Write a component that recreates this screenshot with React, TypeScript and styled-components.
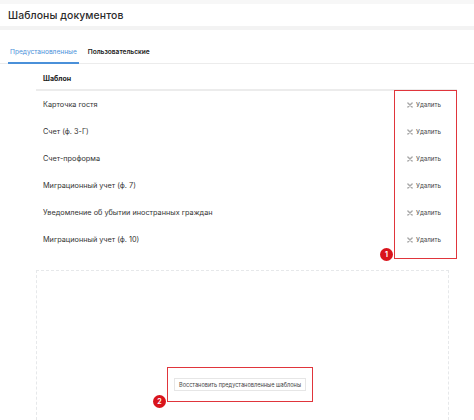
import React from "react";
import styled, { createGlobalStyle } from "styled-components";

const Global = createGlobalStyle`
  html, body { margin: 0; padding: 0; background: #ffffff; }
  body { font-family: Inter, "Noto Sans", sans-serif; color: #333; }
  * { box-sizing: border-box; }
`;

const Page = styled.div`
  width: 474px;
  height: 420px;
  overflow: hidden;
  background: #fff;
  display: flex;
  flex-direction: column;
  border-top: 4px solid #f7f7f7;
`;

const Header = styled.div`
  height: 22px;
  display: flex;
  align-items: center;
  padding-left: 8px;
  border-bottom: 4px solid #f3f3f3;
  box-sizing: content-box;
`;

const Title = styled.h1`
  margin: 0;
  font-size: 10.4px;
  font-weight: 500;
  color: #2b2b2b;
  letter-spacing: 0.1px;
`;

const Tabs = styled.div`
  margin-top: 12px;
  display: flex;
  gap: 7px;
  padding-left: 8px;
  border-bottom: 1px solid #ececec;
`;

const Tab = styled.div<{ $active?: boolean }>`
  height: 22px;
  padding: 0 2px;
  display: flex;
  align-items: center;
  font-size: 6.6px;
  font-weight: ${(p) => (p.$active ? 400 : 600)};
  color: ${(p) => (p.$active ? "#4a90d9" : "#222")};
  border-bottom: 2px solid ${(p) => (p.$active ? "#4a90d9" : "transparent")};
  margin-bottom: -1px;
`;

const Table = styled.div`
  position: relative;
  margin-left: 36px;
  width: 421px;
  margin-top: 4px;
`;

const HeadRow = styled.div`
  height: 23px;
  display: flex;
  align-items: center;
  padding-left: 7px;
  font-size: 7px;
  font-weight: 700;
  color: #222;
  border-bottom: 2px solid #ececec;
`;

const Row = styled.div`
  height: 27px;
  display: flex;
  align-items: center;
  justify-content: space-between;
  padding-left: 7px;
`;

const Name = styled.span`
  font-size: 7.3px;
  color: #333;
`;

const DeleteCell = styled.div`
  width: 62px;
  display: flex;
  align-items: center;
  gap: 3px;
  padding-left: 12px;
  font-size: 6.2px;
  color: #444;
`;

const Annot = styled.div`
  position: absolute;
  right: 0;
  top: 22px;
  width: 63px;
  height: 169px;
  border: 1.5px solid #e0353b;
  pointer-events: none;
`;

const Badge = styled.div<{ $left: number; $bottom: number }>`
  position: absolute;
  width: 13px;
  height: 13px;
  border-radius: 50%;
  background: #d9141c;
  color: #fff;
  font-size: 7px;
  font-weight: 700;
  display: flex;
  align-items: center;
  justify-content: center;
  left: ${(p) => p.$left}px;
  bottom: ${(p) => p.$bottom}px;
`;

const Panel = styled.div`
  margin-left: 36px;
  margin-top: 17px;
  width: 413px;
  flex: 1;
  border: 1px dashed #e6e8ea;
  border-bottom: none;
  display: flex;
  justify-content: center;
  padding-top: 96px;
`;

const ButtonFrame = styled.div`
  position: relative;
  height: 35px;
  width: 146px;
  border: 1.5px solid #e0353b;
  display: flex;
  align-items: center;
  justify-content: center;
  margin-right: 5px;
`;

const RestoreButton = styled.button`
  height: 13px;
  padding: 0 4px;
  border: 1px solid #e6e6e6;
  background: #fff;
  font-family: Inter, "Noto Sans", sans-serif;
  font-size: 5.6px;
  color: #444;
  display: flex;
  align-items: center;
`;

const XIcon = () => (
  <svg width="6" height="6" viewBox="0 0 10 10">
    <path d="M1.5 1.5 L8.5 8.5 M8.5 1.5 L1.5 8.5" stroke="#a8a8a8" strokeWidth="2.4" strokeLinecap="round" />
  </svg>
);

const rows = [
  "Карточка гостя",
  "Счет (ф. 3-Г)",
  "Счет-проформа",
  "Миграционный учет (ф. 7)",
  "Уведомление об убытии иностранных граждан",
  "Миграционный учет (ф. 10)",
];

export default function App() {
  return (
    <>
      <Global />
      <Page>
        <Header>
          <Title>Шаблоны документов</Title>
        </Header>
        <Tabs>
          <Tab $active>Предустановленные</Tab>
          <Tab>Пользовательские</Tab>
        </Tabs>
        <Table>
          <HeadRow>Шаблон</HeadRow>
          {rows.map((r) => (
            <Row key={r}>
              <Name>{r}</Name>
              <DeleteCell>
                <XIcon />
                Удалить
              </DeleteCell>
            </Row>
          ))}
          <Annot>
            <Badge $left={-15} $bottom={-3}>1</Badge>
          </Annot>
        </Table>
        <Panel>
          <ButtonFrame>
            <RestoreButton>Восстановить предустановленные шаблоны</RestoreButton>
            <Badge $left={-15} $bottom={-7}>2</Badge>
          </ButtonFrame>
        </Panel>
      </Page>
    </>
  );
}
